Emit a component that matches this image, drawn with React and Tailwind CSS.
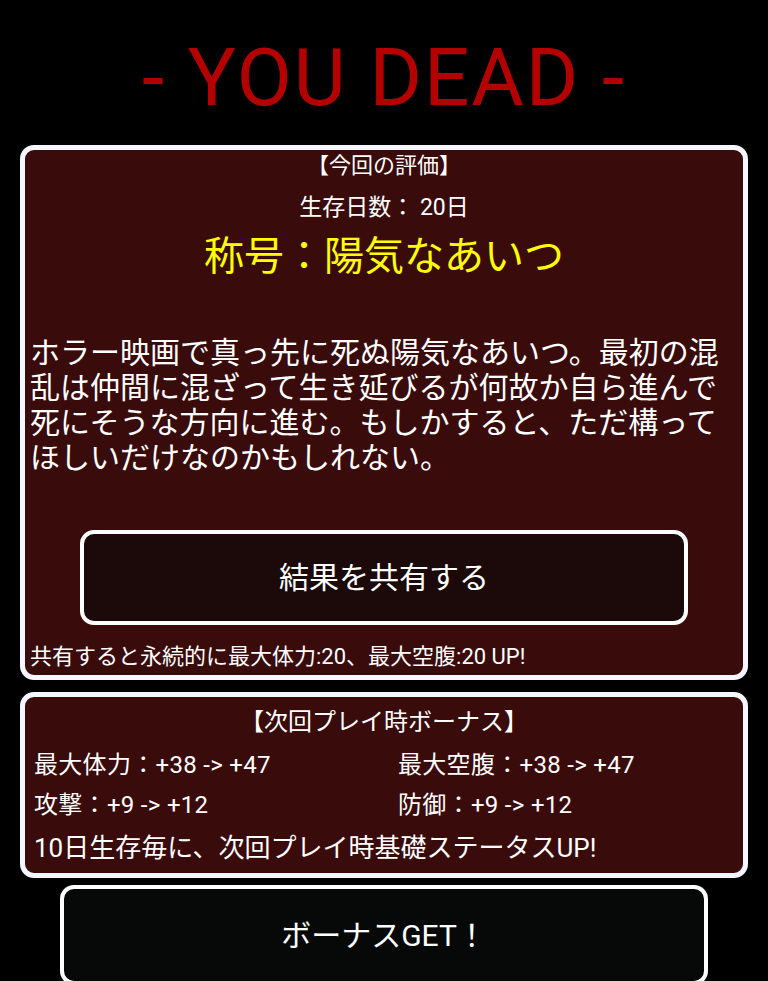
const font = { fontFamily: 'Roboto, "Noto Sans CJK JP", sans-serif' };

function StatRow({ left, right }) {
  return (
    <div className="grid grid-cols-[364px_1fr] text-[24px] leading-[40px] tracking-[0.3px]">
      <div>{left}</div>
      <div>{right}</div>
    </div>
  );
}

export default function App() {
  return (
    <div
      className="w-full h-[981px] overflow-hidden bg-black text-white font-['Roboto','Noto_Sans_CJK_JP',sans-serif]"
      style={font}
    >
      {/* title */}
      <div className="h-[145px] pt-[38px] text-center">
        <h1 className="text-[80px] leading-[80px] font-normal tracking-[2px] text-[#b50000]">- YOU DEAD -</h1>
      </div>

      {/* result card */}
      <section className="mx-[20px] h-[535px] box-border border-[5px] border-[#f6f6ff] rounded-[14px] bg-[#3a0b0b]">
        <div className="text-center text-[22px] leading-[32px]">【今回の評価】</div>
        <div className="text-center text-[23px] leading-[52px]">生存日数： 20日</div>
        <div className="text-center text-[40px] leading-[46px] text-[#ffff00]">称号：陽気なあいつ</div>
        <p className="mt-[55px] px-[5px] text-[30px] leading-[35px]">
          ホラー映画で真っ先に死ぬ陽気なあいつ。最初の混乱は仲間に混ざって生き延びるが何故か自ら進んで死にそうな方向に進む。もしかすると、ただ構ってほしいだけなのかもしれない。
        </p>
        <button className="mt-[55px] mx-[55px] w-[608px] h-[95px] box-border border-4 border-white rounded-[14px] bg-[#1c0909] text-[30px] text-white">
          結果を共有する
        </button>
        <div className="mt-[15px] px-[5px] text-[22px] leading-[34px]">
          共有すると永続的に最大体力:20、最大空腹:20 UP!
        </div>
      </section>

      {/* bonus card */}
      <section className="mx-[20px] mt-[12px] h-[186px] box-border border-[5px] border-[#f6f6ff] rounded-[14px] bg-[#3a0b0b] pl-[9px]">
        <div className="pt-[8px] text-center text-[24px] leading-[34px] -ml-[9px]">【次回プレイ時ボーナス】</div>
        <div className="mt-[6px]">
          <StatRow left="最大体力：+38 -> +47" right="最大空腹：+38 -> +47" />
          <StatRow left="攻撃：+9 -> +12" right="防御：+9 -> +12" />
        </div>
        <div className="text-[26px] leading-[46px]">10日生存毎に、次回プレイ時基礎ステータスUP!</div>
      </section>

      {/* bonus button */}
      <button className="block mt-[7px] mx-[60px] w-[648px] h-[100px] box-border border-4 border-white rounded-[14px] bg-[#060908] text-[30px] text-white">
        ボーナスGET！
      </button>
    </div>
  );
}
